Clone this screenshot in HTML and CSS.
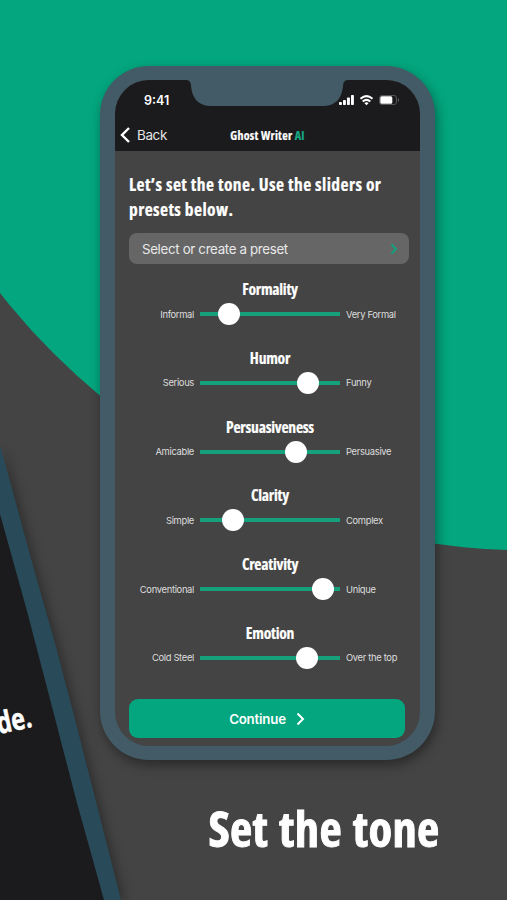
FILE: index.html
```html
<!DOCTYPE html>
<html lang="en">
<head>
<meta charset="utf-8">
<title>Ghost Writer AI</title>
<link rel="stylesheet" href="styles.css">
</head>
<body>
<main class="poster">
  <svg class="backdrop" viewBox="0 0 507 900" aria-hidden="true">
    <circle cx="529.3" cy="-122.5" r="672.9" fill="#03a67e"/>
    <g class="side-phone">
      <path d="M0 445 L17 507 L35 573 L56 647 L77 727 L121 900 H0Z" fill="#294a58"/>
      <path d="M0 514 L27 611 L51 703 L77 803 L104 900 H0Z" fill="#1b1b1d"/>
    </g>
    <text class="side-text" transform="translate(-1 734) rotate(-12)" textLength="35" lengthAdjust="spacingAndGlyphs">de.</text>
  </svg>
  <section class="phone">
    <div class="screen">
      <header class="top">
        <svg class="notch" viewBox="0 0 174 27"><path d="M7 0 H167 Q163 1 163 6 C162 19 155 26 143 26 H31 C18 26 12 18 11 6 Q11 1 7 0Z" fill="#425b66"/></svg>
        <div class="status">
          <span class="time">9:41</span>
          <svg class="signals" viewBox="0 0 62 12">
            <g fill="#fff"><rect x="0" y="8" width="2.900" height="3" rx=".7"/><rect x="4" y="6" width="2.900" height="5" rx=".7"/><rect x="8" y="3.500" width="2.900" height="7.500" rx=".7"/><rect x="12" y="1" width="2.900" height="10" rx=".7"/></g>
            <g fill="none" stroke="#fff" stroke-width="2"><path d="M21.500 4.700 Q27.500 -.4 33.500 4.700"/><path d="M23.700 7.400 Q27.500 4.300 31.300 7.400"/></g>
            <path d="M25.300 9 Q27.500 7.500 29.700 9 L27.500 11.200Z" fill="#fff"/>
            <rect x="40.500" y="1.500" width="17" height="9" rx="2.400" fill="none" stroke="#55555a"/>
            <rect x="41.300" y="2.200" width="12" height="7.600" rx="1.500" fill="#fff"/>
            <path d="M59 4 Q61 6 59 8Z" fill="#66666a"/>
          </svg>
        </div>
        <nav class="nav">
          <span class="back"><svg class="back-icon" viewBox="0 0 11 18"><path d="M9 2 L2 9 L9 16"/></svg>Back</span>
          <span class="brand"><span class="squeeze">Ghost Writer <b class="ai">AI</b></span></span>
        </nav>
      </header>
      <div class="content">
        <h1 class="intro"><span class="squeeze">Let’s set the tone. Use the sliders or</span><br><span class="squeeze">presets below.</span></h1>
        <div class="preset">Select or create a preset<svg class="preset-icon" viewBox="0 0 8 12"><path d="M1.500 1.500 L6 6 L1.500 10.500"/></svg></div>
        <div class="sliders">
          <div class="row"><h2><span class="squeeze">Formality</span></h2><div class="line"><span class="low">Informal</span><span class="track"><i class="knob" style="left:29px"></i></span><span>Very Formal</span></div></div>
          <div class="row"><h2><span class="squeeze">Humor</span></h2><div class="line"><span class="low">Serious</span><span class="track"><i class="knob" style="left:108px"></i></span><span>Funny</span></div></div>
          <div class="row"><h2><span class="squeeze">Persuasiveness</span></h2><div class="line"><span class="low">Amicable</span><span class="track"><i class="knob" style="left:96px"></i></span><span>Persuasive</span></div></div>
          <div class="row"><h2><span class="squeeze">Clarity</span></h2><div class="line"><span class="low">Simple</span><span class="track"><i class="knob" style="left:33px"></i></span><span>Complex</span></div></div>
          <div class="row"><h2><span class="squeeze">Creativity</span></h2><div class="line"><span class="low">Conventional</span><span class="track"><i class="knob" style="left:123px"></i></span><span>Unique</span></div></div>
          <div class="row"><h2><span class="squeeze">Emotion</span></h2><div class="line"><span class="low">Cold Steel</span><span class="track"><i class="knob" style="left:107px"></i></span><span>Over the top</span></div></div>
        </div>
        <div class="continue">Continue<svg class="continue-icon" viewBox="0 0 9 14"><path d="M1.500 1.500 L7 7 L1.500 12.500"/></svg></div>
      </div>
    </div>
  </section>
  <p class="caption"><span class="squeeze">Set the tone</span></p>
</main>
</body>
</html>
```
FILE: styles.css
```css
* { box-sizing: border-box; }
body { margin: 0; background: #444; color: #fff; font-family: Inter, "Liberation Sans", sans-serif; }
h1, h2, p { margin: 0; }
.poster { position: relative; width: 507px; height: 900px; overflow: hidden; padding: 66px 0 0 100px; }
.backdrop { position: absolute; inset: 0; width: 507px; height: 900px; }
.side-phone { filter: drop-shadow(3px 1px 6px rgba(0,0,0,.35)); }
.side-text { font: 700 30px "Open Sans"; fill: #fff; stroke: #fff; stroke-width: .6px; }
.squeeze { font-family: "Open Sans", "Noto Sans", sans-serif; font-stretch: 75%; font-weight: 700; white-space: nowrap; }
.phone { position: relative; width: 335px; height: 694px; padding: 14px 15px; border-radius: 49px; background: #425b66; box-shadow: 2px 5px 12px rgba(0,0,0,.4); }
.screen { height: 666px; border-radius: 34px; overflow: hidden; background: #444; }
.top { position: relative; height: 71px; background: #1b1b1d; }
.notch { position: absolute; left: 65px; top: 0; width: 174px; height: 27px; }
.status { display: flex; justify-content: space-between; height: 39px; padding: 13px 19px 0 29px; }
.time { font-size: 12.5px; font-weight: 600; line-height: 15px; }
.signals { position: relative; width: 62px; height: 12px; margin-top: 1px; }
.nav { display: grid; grid-template-columns: 1fr auto 1fr; align-items: center; height: 32px; padding: 0 5px; }
.back { display: flex; align-items: center; gap: 6px; font-size: 13.5px; letter-spacing: -.4px; color: #e4e4e4; }
.back-icon { width: 11px; height: 18px; }
.back-icon path { fill: none; stroke: #fff; stroke-width: 2.4; }
.brand { font-size: 12px; letter-spacing: .25px; -webkit-text-stroke: .2px; }
.ai { color: #17a983; font-weight: 700; }
.content { padding: 21px 11px 0 14px; }
.intro { font-size: 17.5px; letter-spacing: .41px; line-height: 25.2px; height: 61px; -webkit-text-stroke: .2px; }
.preset { display: flex; align-items: center; justify-content: space-between; width: 280px; height: 31px; padding: 0 11px 0 13px; border-radius: 8px; background: #666; font-size: 13.3px; letter-spacing: -.33px; color: #e9e9e9; }
.preset-icon { width: 8px; height: 12px; }
.preset-icon path { fill: none; stroke: #12a37e; stroke-width: 2; }
.sliders { padding-top: 13px; height: 435px; }
.row { height: 68.8px; }
.row h2 { width: 282px; height: 25px; line-height: 24px; font-size: 15.6px; letter-spacing: -.25px; text-align: center; -webkit-text-stroke: .2px; }
.line { display: grid; grid-template-columns: 65px 140px 1fr; column-gap: 6px; align-items: center; height: 24px; font-size: 9.4px; letter-spacing: -.32px; color: #dedede; white-space: nowrap; }
.low { text-align: right; }
.track { position: relative; height: 4px; background: #14a17b; }
.knob { position: absolute; top: -9px; width: 22px; height: 22px; margin-left: -11px; border-radius: 50%; background: #fff; }
.continue { display: flex; align-items: center; justify-content: center; gap: 10px; width: 276px; height: 39px; border-radius: 9px; background: #03a67e; font-size: 13.3px; letter-spacing: -.2px; font-weight: 600; }
.continue-icon { width: 9px; height: 14px; }
.continue-icon path { fill: none; stroke: #fff; stroke-width: 2; }
.caption { position: relative; width: 448px; margin: 38px 0 0; height: 60px; line-height: 60px; text-align: center; font-size: 48.5px; letter-spacing: .3px; word-spacing: 2px; -webkit-text-stroke: .9px; }
```
